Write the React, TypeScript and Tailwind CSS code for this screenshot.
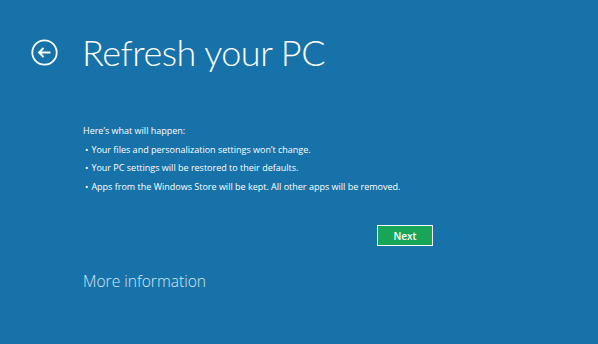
export default function App() {
  const items = [
    "Your files and personalization settings won\u2019t change.",
    "Your PC settings will be restored to their defaults.",
    "Apps from the Windows Store will be kept. All other apps will be removed.",
  ];
  return (
    <div className="h-[344px] w-[598px] overflow-hidden bg-[#1672a9] font-['Open_Sans',sans-serif] text-white">
      <div className="flex items-center pt-[27px]">
        <button className="ml-[31px] flex h-[27px] w-[27px] items-center justify-center">
          <svg width="27" height="27" viewBox="0 0 27 27" fill="none" stroke="white" strokeWidth="1.8">
            <circle cx="13.5" cy="13.5" r="12.2" />
            <path d="M8 13.5h11.5M12.5 9l-4.5 4.5 4.5 4.5" />
          </svg>
        </button>
        <h1 className="ml-[24px] font-['Lato',sans-serif] text-[36px] font-light leading-[50px] tracking-[-0.5px]">
          Refresh your PC
        </h1>
      </div>

      <div className="ml-[83px] mt-[45px] text-[9px] leading-[18.7px]">
        <p>Here&rsquo;s what will happen:</p>
        <ul>
          {items.map((t) => (
            <li key={t} className="flex gap-[3px] pl-[2px]">
              <span>&bull;</span>
              <span>{t}</span>
            </li>
          ))}
        </ul>
      </div>

      <div className="ml-[377px] mt-[25px]">
        <button className="h-[21px] w-[56px] border border-white bg-[#19a558] text-[10px] font-semibold leading-none text-white">
          Next
        </button>
      </div>

      <p className="ml-[83px] mt-[24px] text-[15.6px] font-light text-[#d6e6f2]">More information</p>
    </div>
  );
}
